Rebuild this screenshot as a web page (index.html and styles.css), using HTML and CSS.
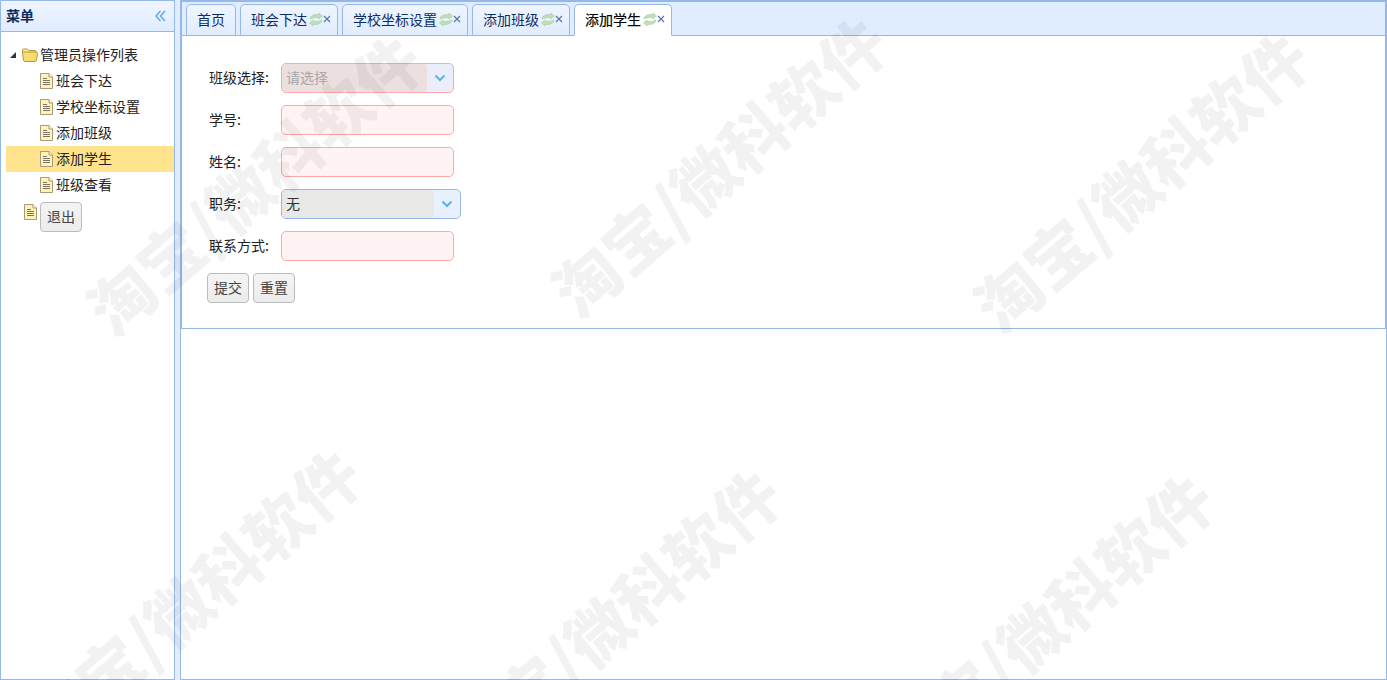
FILE: index.html
```html
<!DOCTYPE html>
<html lang="zh-CN">
  <head>
    <meta charset="UTF-8" />
    <meta name="viewport" content="width=device-width, initial-scale=1.0" />
    <title>添加学生</title>
    <link rel="stylesheet" href="styles.css">
  </head>
  <body>
    <svg class="icon-defs" width="0" height="0" aria-hidden="true">
      <symbol id="file" viewBox="0 0 13 16">
        <path d="M.5.5h8.5l3.500 3.500v11.500h-12z" fill="#fff3b8" stroke="#a8997a"/>
        <path d="M9 .5v3.500h3.500" fill="#fffbe6" stroke="#a8997a"/>
        <path d="M3 5.500h4M3 7.500h7M3 9.500h7M3 11.500h7" stroke="#7a7466"/>
      </symbol>
      <symbol id="refresh" viewBox="0 0 14 13">
        <path d="M1 6C1.500 2.500 4.500 1.500 8 1.500h2V0l3.500 3L10 6V4.500H7C5 4.500 3 5 1 6z" fill="#bfe0b4" stroke="#a3cf9c" stroke-width=".6"/>
        <path d="M13 7C12.500 10.500 9.500 11.500 6 11.500H4V13L.5 10 4 7v1.500h3C9 8.500 11 8 13 7z" fill="#bfe0b4" stroke="#a3cf9c" stroke-width=".6"/>
      </symbol>
      <symbol id="close" viewBox="0 0 8 8">
        <path d="M1 1l6 6M7 1L1 7" stroke="#5a78a8" stroke-width="1.200"/>
      </symbol>
      <symbol id="chevron" viewBox="0 0 12 8">
        <path d="M1.500 1.500L6 6l4.500-4.500" fill="none" stroke="#62b0ea" stroke-width="2"/>
      </symbol>
    </svg>

    <div class="layout">
      <aside class="west">
        <div class="panel-header">
          <span class="panel-title">菜单</span>
          <svg class="collapse" width="11" height="12" viewBox="0 0 11 12">
            <path d="M5.500 1L1 6l4.500 5M10 1L5.500 6l4.500 5" fill="none" stroke="#5b9fe6" stroke-width="1.300"/>
          </svg>
        </div>
        <ul class="tree">
          <li class="tree-node root">
            <span class="tree-arrow"></span>
            <svg class="folder" width="16" height="14" viewBox="0 0 16 14">
              <path d="M.5 3V2Q.5 1 1.500 1h4l1.500 1.500h6q1 0 1 1V5h-14z" fill="#f7e8a8" stroke="#b89a3c"/>
              <path d="M.5 5.500Q.5 4 2 4h12q1.500 0 1.500 1.500L14.500 12q-.2 1.500-1.500 1.500H3q-1.300 0-1.500-1.500z" fill="#f8dc72" stroke="#b89a3c"/>
            </svg>
            <span class="node-text">管理员操作列表</span>
          </li>
          <li class="tree-node leaf"><svg class="file" width="13" height="16"><use href="#file"/></svg><span class="node-text">班会下达</span></li>
          <li class="tree-node leaf"><svg class="file" width="13" height="16"><use href="#file"/></svg><span class="node-text">学校坐标设置</span></li>
          <li class="tree-node leaf"><svg class="file" width="13" height="16"><use href="#file"/></svg><span class="node-text">添加班级</span></li>
          <li class="tree-node leaf selected"><svg class="file" width="13" height="16"><use href="#file"/></svg><span class="node-text">添加学生</span></li>
          <li class="tree-node leaf"><svg class="file" width="13" height="16"><use href="#file"/></svg><span class="node-text">班级查看</span></li>
          <li class="tree-logout"><svg class="file" width="13" height="16"><use href="#file"/></svg><button class="btn">退出</button></li>
        </ul>
      </aside>

      <main class="center">
        <div class="tabs-box">
          <ul class="tabs">
            <li class="tab">首页</li>
            <li class="tab closable">班会下达<svg class="tab-refresh" width="14" height="13"><use href="#refresh"/></svg><svg class="tab-close" width="8" height="8"><use href="#close"/></svg></li>
            <li class="tab closable">学校坐标设置<svg class="tab-refresh" width="14" height="13"><use href="#refresh"/></svg><svg class="tab-close" width="8" height="8"><use href="#close"/></svg></li>
            <li class="tab closable">添加班级<svg class="tab-refresh" width="14" height="13"><use href="#refresh"/></svg><svg class="tab-close" width="8" height="8"><use href="#close"/></svg></li>
            <li class="tab closable active">添加学生<svg class="tab-refresh" width="14" height="13"><use href="#refresh"/></svg><svg class="tab-close" width="8" height="8"><use href="#close"/></svg></li>
          </ul>
          <form class="student-form">
            <div class="form-row">
              <label>班级选择:</label>
              <div class="combo invalid disabled">
                <span class="combo-text placeholder">请选择</span>
                <span class="combo-arrow"><svg width="12" height="8"><use href="#chevron"/></svg></span>
              </div>
            </div>
            <div class="form-row">
              <label for="studentNo">学号:</label>
              <input class="text-input" type="text" id="studentNo" />
            </div>
            <div class="form-row">
              <label for="studentName">姓名:</label>
              <input class="text-input" type="text" id="studentName" />
            </div>
            <div class="form-row">
              <label>职务:</label>
              <div class="combo wide">
                <span class="combo-text">无</span>
                <span class="combo-arrow"><svg width="12" height="8"><use href="#chevron"/></svg></span>
              </div>
            </div>
            <div class="form-row">
              <label for="phone">联系方式:</label>
              <input class="text-input" type="text" id="phone" />
            </div>
            <div class="form-actions">
              <button class="btn" type="button">提交</button>
              <button class="btn" type="button">重置</button>
            </div>
          </form>
        </div>
      </main>
    </div>

    <div class="watermarks" aria-hidden="true">
      <span class="wm wm-1">淘宝/微科软件</span>
      <span class="wm wm-2">淘宝/微科软件</span>
      <span class="wm wm-3">淘宝/微科软件</span>
      <span class="wm wm-4">淘宝/微科软件</span>
      <span class="wm wm-5">淘宝/微科软件</span>
      <span class="wm wm-6">淘宝/微科软件</span>
    </div>
  </body>
</html>
```

FILE: styles.css
```css
* {
  box-sizing: border-box;
}
html,
body {
  height: 100%;
}
body {
  margin: 0;
  overflow: hidden;
  position: relative;
  background-color: #e0ecff;
  color: #222;
  font-family: "Noto Sans CJK SC", "Liberation Sans", sans-serif;
  font-size: 14px;
}
ul {
  list-style: none;
  margin: 0;
  padding: 0;
}
.icon-defs {
  position: absolute;
}
.layout {
  display: flex;
  gap: 5px;
  height: 100%;
}

/* left menu */
.west {
  width: 175px;
  flex: none;
  background-color: white;
  border: 1px solid #95b8e7;
}
.panel-header {
  height: 31px;
  display: flex;
  align-items: center;
  justify-content: space-between;
  padding: 0 8px 1px 5px;
  background: linear-gradient(to bottom, #eff5ff, #e0ecff);
  border-bottom: 1px solid #95b8e7;
}
.panel-title {
  font-weight: bold;
  color: #0e2d5f;
  line-height: 24px;
  padding-bottom: 1px;
}
.tree {
  padding: 10px 0 0 5px;
}
.tree-node {
  height: 26px;
  display: flex;
  align-items: center;
}
.node-text {
  line-height: 22px;
  padding-bottom: 2px;
}
.root {
  padding-left: 4px;
}
.tree-arrow {
  width: 0;
  height: 0;
  margin-right: 6px;
  border-left: 6px solid transparent;
  border-bottom: 6px solid #333;
}
.folder {
  margin-right: 2px;
}
.leaf {
  padding-left: 34px;
}
.file {
  flex: none;
}
.leaf .file {
  margin-right: 3px;
}
.selected {
  background-color: #ffe48d;
}
.tree-logout {
  display: flex;
  align-items: flex-start;
  gap: 3px;
  margin-top: 4px;
  padding: 0 0 0 18px;
}
.tree-logout .file {
  margin-top: 2px;
}

/* tabs */
.center {
  flex: 1;
  min-width: 0;
  background-color: white;
  border: 1px solid #95b8e7;
}
.tabs-box {
  border: 1px solid #95b8e7;
}
.tabs {
  display: flex;
  gap: 4px;
  height: 34px;
  padding: 2px 0 0 4px;
  background-color: #e0ecff;
  border-bottom: 1px solid #95b8e7;
}
.tab {
  display: flex;
  align-items: center;
  height: 32px;
  padding: 0 10px 2px;
  line-height: 26px;
  color: #0e2d5f;
  background: linear-gradient(to bottom, #eff5ff, #e0ecff);
  border: 1px solid #95b8e7;
  border-radius: 5px 5px 0 0;
}
.tab.closable {
  padding-right: 6px;
}
.tab.active {
  background: white;
  border-bottom-color: white;
  color: #000;
  -webkit-text-stroke: 0.2px #000;
}
.tab-refresh {
  margin-left: 2px;
}

/* form */
.student-form {
  height: 292px;
  padding: 27px 0 0 27px;
}
.form-row {
  display: flex;
  align-items: center;
  height: 30px;
  margin-bottom: 12px;
}
.form-row label {
  width: 72px;
  flex: none;
  padding-bottom: 2px;
  color: #222;
}
.text-input {
  width: 173px;
  height: 30px;
  background-color: #fff3f3;
  border: 1px solid #ffa8a8;
  border-radius: 5px;
}
.combo {
  display: flex;
  width: 173px;
  height: 30px;
  overflow: hidden;
  background-color: #e8f1ff;
  border: 1px solid #95b8e7;
  border-radius: 5px;
}
.combo.wide {
  width: 180px;
}
.combo.invalid {
  background-color: #eaeefb;
  border-color: #ffa8a8;
}
.combo-text {
  flex: 1;
  padding-left: 4px;
  line-height: 26px;
  color: #333;
  background-color: #e8e8e6;
  border-radius: 4px;
}
.combo.disabled .combo-text {
  background-color: #ecdfdf;
}
.placeholder {
  color: #a8a8a8;
}
.combo-arrow {
  width: 26px;
  flex: none;
  display: flex;
  align-items: center;
  justify-content: center;
}
.form-actions {
  display: flex;
  gap: 4px;
  margin-left: -2px;
}
.btn {
  width: 42px;
  height: 30px;
  padding: 0 0 2px;
  font: inherit;
  color: #444;
  background: linear-gradient(to bottom, #f4f4f4, #ececec);
  border: 1px solid #bbb;
  border-radius: 4px;
}

/* watermark over the whole page */
.watermarks {
  position: absolute;
  inset: 0;
  overflow: hidden;
  pointer-events: none;
}
.wm {
  position: absolute;
  font-size: 65px;
  font-weight: 900;
  line-height: 1;
  white-space: nowrap;
  color: rgba(0, 0, 0, 0.05);
  transform: translate(-50%, -50%) rotate(-40.7deg);
}
.wm-1 { left: 253px; top: 183px; }
.wm-2 { left: 718px; top: 165px; }
.wm-3 { left: 1140px; top: 180px; }
.wm-4 { left: 192px; top: 597px; }
.wm-5 { left: 612px; top: 617px; }
.wm-6 { left: 1045px; top: 622px; }
```
